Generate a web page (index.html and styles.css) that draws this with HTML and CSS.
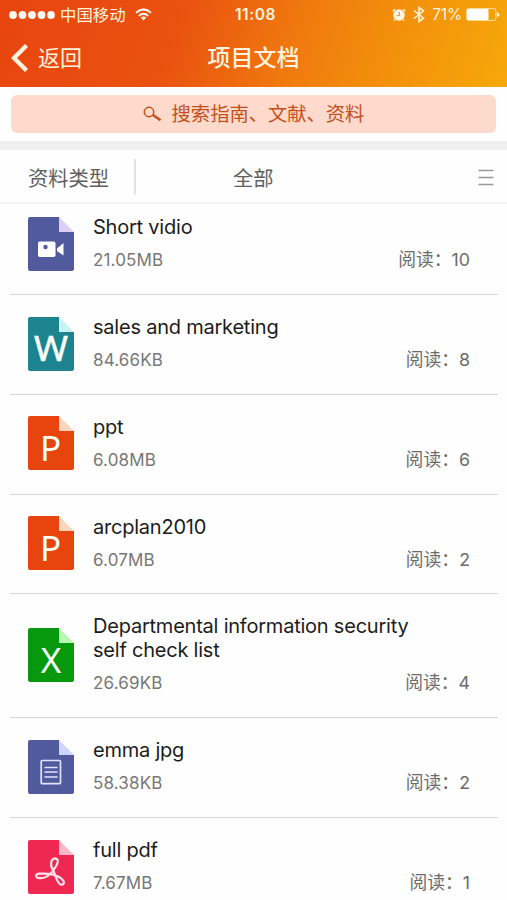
FILE: index.html
```html
<!DOCTYPE html>
<html lang="zh-CN">
<head>
<meta charset="utf-8">
<title>项目文档</title>
<link rel="stylesheet" href="styles.css">
</head>
<body>
<header class="header">
  <div class="status">
    <div class="carrier">
      <svg width="46" height="8" viewBox="0 0 46 8" fill="currentColor"><circle cx="4" cy="4" r="3.9"/><circle cx="13.5" cy="4" r="3.9"/><circle cx="23" cy="4" r="3.9"/><circle cx="32.500" cy="4" r="3.9"/><circle cx="42" cy="4" r="3.9"/></svg>
      <span class="operator">中国移动</span>
      <svg width="17" height="13" viewBox="0 0 17 13" fill="none" stroke="currentColor" stroke-width="2"><path d="M1 4.700Q8.500-1.900 16 4.700M3.800 7.900Q8.500 3.700 13.200 7.900"/><path d="M5.800 9.600Q8.500 7.500 11.200 9.600L8.500 12.400Z" fill="currentColor" stroke="none"/></svg>
    </div>
    <span class="clock">11:08</span>
    <div class="power">
      <svg width="14" height="14" viewBox="0 0 14 14"><circle cx="7" cy="7" r="5.800" fill="currentColor"/><path d="M.8 3.300 3 1.200M13.200 3.300 11 1.200M3 11.500 2 12.800M11 11.500 12 12.800" stroke="currentColor" stroke-width="1.400"/><path d="M7.400 4V7.600H5" fill="none" stroke="#f1880f" stroke-width="1"/></svg>
      <svg class="bluetooth" width="12" height="17" viewBox="0 0 12 17" fill="none" stroke="currentColor" stroke-width="1.600"><path d="M1 4.500 10.500 12.200 6 15.500V1.500L10.500 4.800 1 12.500"/></svg>
      <span class="percent">71%</span>
      <svg width="34" height="13" viewBox="0 0 34 13"><rect x=".6" y=".6" width="29.300" height="11.800" rx="2" fill="none" stroke="currentColor" stroke-width="1" opacity=".75"/><rect x="1" y="1" width="21.500" height="11" rx="1" fill="#fff"/><path d="M31 4Q33.500 5 33.500 6.500T31 9Z" fill="currentColor"/></svg>
    </div>
  </div>
  <nav class="nav">
    <a class="back"><svg width="18" height="28" viewBox="0 0 18 28" fill="none" stroke="currentColor" stroke-width="4.300"><path d="M15.500 1.500 3 14 15.500 26.500"/></svg><span>返回</span></a>
    <h1 class="heading">项目文档</h1>
  </nav>
</header>
<div class="search-area">
  <div class="search">
    <svg width="19" height="16" viewBox="0 0 19 16" fill="none" stroke="currentColor"><circle cx="6" cy="6" r="4.700" stroke-width="1.500"/><path d="M9.700 8.700 17.500 14.300" stroke-width="2.600"/></svg>
    <span>搜索指南、文献、资料</span>
  </div>
</div>
<div class="filter">
  <div class="filter-label">资料类型</div>
  <div class="filter-value">全部</div>
  <svg class="menu" width="16" height="17" viewBox="0 0 16 17" stroke="currentColor" stroke-width="1.700"><path d="M.5 1.500H15.500M.5 8.500H15.500M.5 15.500H15.500"/></svg>
</div>
<main class="list">
  <article class="row first">
    <svg class="icon video" viewBox="0 0 46 54"><path class="page" d="M2 0H31V15H46V52Q46 54 44 54H2Q0 54 0 52V2Q0 0 2 0Z"/><path class="fold" d="M31 0 46 15H31Z"/><rect x="10" y="24.500" width="17.500" height="15.500" rx="1.800" fill="#fff"/><path d="M29 31.500 35.500 26V38.500L29 34Z" fill="#fff"/><circle class="lens" cx="17.500" cy="30" r="2.200"/></svg>
    <h2 class="title">Short vidio</h2><span class="size">21.05MB</span><span class="reads">阅读：<b>10</b></span>
  </article>
  <article class="row">
    <svg class="icon word" viewBox="0 0 46 54"><path class="page" d="M2 0H31V15H46V52Q46 54 44 54H2Q0 54 0 52V2Q0 0 2 0Z"/><path class="fold" d="M31 0 46 15H31Z"/><text x="23" y="43.800" textLength="34" lengthAdjust="spacingAndGlyphs">W</text></svg>
    <h2 class="title">sales and marketing</h2><span class="size">84.66KB</span><span class="reads">阅读：<b>8</b></span>
  </article>
  <article class="row">
    <svg class="icon slides" viewBox="0 0 46 54"><path class="page" d="M2 0H31V15H46V52Q46 54 44 54H2Q0 54 0 52V2Q0 0 2 0Z"/><path class="fold" d="M31 0 46 15H31Z"/><text x="22.500" y="45">P</text></svg>
    <h2 class="title">ppt</h2><span class="size">6.08MB</span><span class="reads">阅读：<b>6</b></span>
  </article>
  <article class="row">
    <svg class="icon slides" viewBox="0 0 46 54"><path class="page" d="M2 0H31V15H46V52Q46 54 44 54H2Q0 54 0 52V2Q0 0 2 0Z"/><path class="fold" d="M31 0 46 15H31Z"/><text x="22.500" y="45">P</text></svg>
    <h2 class="title">arcplan2010</h2><span class="size">6.07MB</span><span class="reads">阅读：<b>2</b></span>
  </article>
  <article class="row tall">
    <svg class="icon sheet" viewBox="0 0 46 54"><path class="page" d="M2 0H31V15H46V52Q46 54 44 54H2Q0 54 0 52V2Q0 0 2 0Z"/><path class="fold" d="M31 0 46 15H31Z"/><text x="23" y="45">X</text></svg>
    <h2 class="title">Departmental information security self check list</h2><span class="size">26.69KB</span><span class="reads">阅读：<b>4</b></span>
  </article>
  <article class="row">
    <svg class="icon image" viewBox="0 0 46 54"><path class="page" d="M2 0H31V15H46V52Q46 54 44 54H2Q0 54 0 52V2Q0 0 2 0Z"/><path class="fold" d="M31 0 46 15H31Z"/><g fill="none" stroke="#dfe3ff" stroke-width="1.700"><rect x="13.200" y="20.500" width="19.300" height="23.200" rx="1"/><path d="M16.500 27.500H29.500M16.500 32H29.500M16.500 37H29.500"/></g></svg>
    <h2 class="title">emma jpg</h2><span class="size">58.38KB</span><span class="reads">阅读：<b>2</b></span>
  </article>
  <article class="row">
    <svg class="icon pdf" viewBox="0 0 46 54"><path class="page" d="M2 0H31V15H46V52Q46 54 44 54H2Q0 54 0 52V2Q0 0 2 0Z"/><path class="fold" d="M31 0 46 15H31Z"/><path d="M25 30C22 26 22.500 18.500 27 18.300C31.500 18.500 30 24 26.500 28.500C23 34 18 38.500 12 38.200C7 37.800 6.500 34 11.500 33.700C18 33.200 25 33.500 31 37C36 39.500 37 43 34.500 44.600C31 46 28.500 39 27 35C26.200 32.500 25.800 31 25 30Z" fill="none" stroke="#ffe3e8" stroke-width="2.200"/></svg>
    <h2 class="title">full pdf</h2><span class="size">7.67MB</span><span class="reads">阅读：<b>1</b></span>
  </article>
</main>
</body>
</html>
```
FILE: styles.css
```css
* { box-sizing: border-box; }
body {
  margin: 0;
  height: 900px;
  overflow: hidden;
  background: #fefefe;
  color: #1c1c1c;
  font-family: Inter, "Noto Sans CJK SC", sans-serif;
}
svg { display: block; flex: none; }
.header {
  height: 87px;
  color: #fff3df;
  background: linear-gradient(108deg, #e8450f 0%, #ea5210 35%, #f07a0e 58%, #f3920b 78%, #f6a80a 100%);
}
.status {
  display: grid;
  grid-template-columns: 1fr auto 1fr;
  align-items: center;
  height: 29px;
  padding: 0 7px 0 9px;
  font-size: 15px;
}
.carrier, .power { display: flex; align-items: center; }
.carrier svg { color: #fff8ee; }
.operator { margin: 0 9px 0 5px; font-size: 16.4px; line-height: 20px; }
.clock { font-size: 15.5px; font-weight: 600; letter-spacing: .6px; padding-left: 2px; }
.power { justify-content: flex-end; }
.bluetooth { margin: 0 7px 0 7px; }
.percent { margin-right: 4px; font-size: 15.5px; letter-spacing: -.2px; }
.nav {
  display: grid;
  grid-template-columns: 1fr auto 1fr;
  align-items: center;
  height: 57px;
  padding: 0 11px;
}
.back { display: flex; align-items: center; gap: 9px; font-size: 22px; line-height: 30px; }
.heading { margin: 0; font-size: 23px; line-height: 30px; font-weight: 500; }
.search-area { height: 63px; padding: 8px 11px 0; border-bottom: 9px solid #efefef; }
.search {
  display: flex;
  align-items: center;
  justify-content: center;
  gap: 10px;
  height: 38px;
  border-radius: 6px;
  background: #fddacb;
  color: #c5501d;
  font-size: 19.3px;
  line-height: 28px;
}
.filter {
  display: flex;
  align-items: center;
  height: 54px;
  padding: 2px 13px 0 0;
  border-bottom: 2px solid #f3f3f3;
  color: #606060;
  font-size: 20.3px;
  line-height: 34px;
}
.filter-label { width: 136px; height: 36px; padding: 3px 0 0 28px; border-right: 2px solid #e4e4e4; }
.filter-value { flex: 1; padding: 4px 0 0 97px; }
.menu { color: #999; }
.row {
  display: grid;
  grid-template-columns: 65px 1fr auto;
  grid-template-rows: 24px 20px;
  align-content: start;
  row-gap: 11px;
  height: 99.800px;
  margin: 0 9px 0 10px;
  padding: 20px 28px 0 18px;
  border-bottom: 1px solid #d4d4d4;
}
.first { height: 91px; padding-top: 11px; }
.tall { height: 124px; grid-template-rows: 48px 20px; }
.icon { grid-row: 1 / 3; width: 46px; height: 54px; margin-top: 1.500px; }
.tall .icon { margin-top: 14px; }
.title { grid-column: 2 / 4; margin: 0; max-width: 335px; font-size: 20px; line-height: 24px; font-weight: 400; letter-spacing: -.22px; }
.size { font-size: 17px; line-height: 20px; letter-spacing: .15px; color: #777; }
.reads { font-size: 17.800px; line-height: 20px; color: #6c6c6c; }
.reads b { font-weight: 400; }
.icon text { fill: #f7fff9; font-family: "Noto Sans", sans-serif; font-size: 35px; text-anchor: middle; }
.word text { stroke: #f7fff9; stroke-width: .5px; }
.video, .image { --page: #515a9c; --fold: #dfcdf8; }
.image { --fold: #ccd3fc; }
.word { --page: #1c838f; --fold: #c9f2f5; }
.slides { --page: #e8450e; --fold: #fbd6bd; }
.sheet { --page: #06990d; --fold: #b5f6b3; }
.pdf { --page: #ee2850; --fold: #fcb8c5; }
.page, .lens { fill: var(--page); }
.fold { fill: var(--fold); }
```
